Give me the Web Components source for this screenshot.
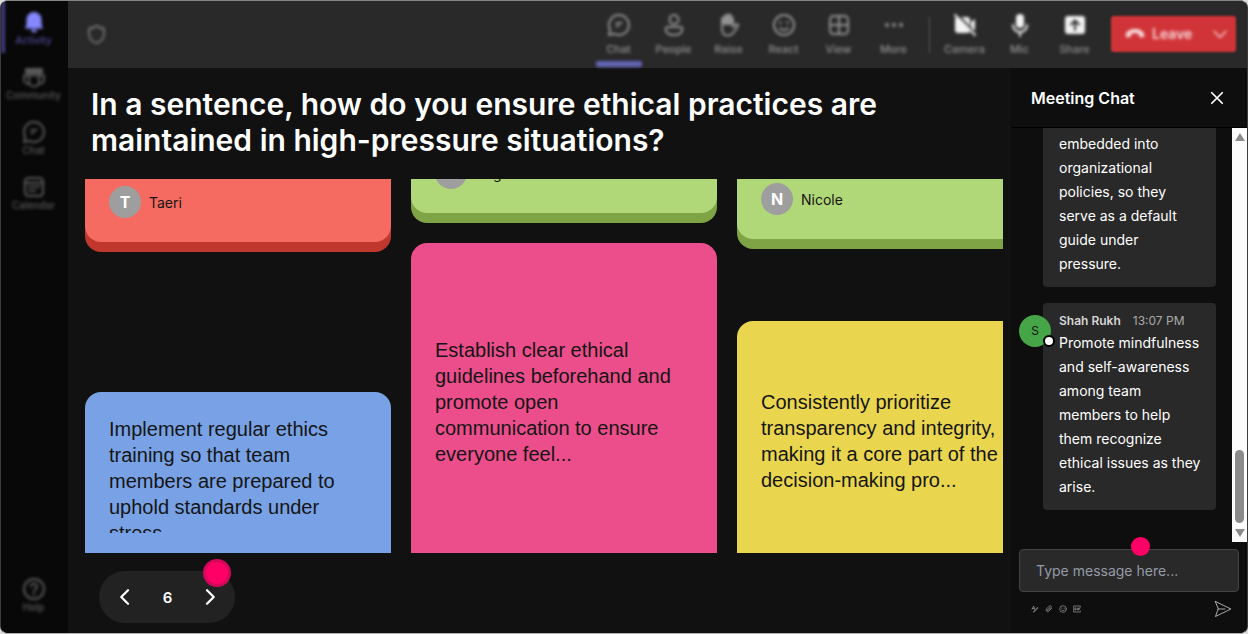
<!DOCTYPE html>
<html lang="en">
<head>
<meta charset="utf-8">
<meta name="viewport" content="width=device-width, initial-scale=1">
<title>Meeting</title>
<style>
    :root {
        --font: Inter, 'Liberation Sans', sans-serif;
        --bg: #111111;
        --bar: #292929;
        --accent: #6366b8;
        --pink: #ff0066;
        --soft: blur(1px) blur(1px);
    }

    body {
        margin: 0;
        background: #dcdcdc;
        font-family: var(--font);
        color: #fff;
    }
</style>
</head>
<body>
<meeting-app>
    <side-rail slot="rail">
        <rail-item icon="bell" active>Activity</rail-item>
        <rail-item icon="community">Community</rail-item>
        <rail-item icon="chat">Chat</rail-item>
        <rail-item icon="calendar">Calendar</rail-item>
        <rail-item icon="help" slot="bottom">Help</rail-item>
    </side-rail>

    <meeting-toolbar slot="toolbar">
        <tool-item icon="chat" active>Chat</tool-item>
        <tool-item icon="people">People</tool-item>
        <tool-item icon="hand">Raise</tool-item>
        <tool-item icon="smile">React</tool-item>
        <tool-item icon="grid">View</tool-item>
        <tool-item icon="more">More</tool-item>
        <tool-item slot="devices" icon="camera" bright>Camera</tool-item>
        <tool-item slot="devices" icon="mic" bright>Mic</tool-item>
        <tool-item slot="devices" icon="share" bright>Share</tool-item>
    </meeting-toolbar>

    <answer-board slot="board">
        <span slot="question">In a sentence, how do you ensure ethical practices are maintained in high-pressure situations?</span>
        <answer-column style="--head: 63px; --gap: 140px">
            <answer-card color="red" author="Taeri"></answer-card>
            <answer-card color="blue">Implement regular ethics training so that team members are prepared to uphold standards under stress.</answer-card>
        </answer-column>
        <answer-column style="--head: 34px; --gap: 20px; --text-top: 94px">
            <answer-card color="green" author="Angel"></answer-card>
            <answer-card color="pink">Establish clear ethical guidelines beforehand and promote open communication to ensure everyone feel...</answer-card>
        </answer-column>
        <answer-column style="--head: 60px; --gap: 72px; --text-top: 68px">
            <answer-card color="green" author="Nicole"></answer-card>
            <answer-card color="yellow">Consistently prioritize transparency and integrity, making it a core part of the decision-making pro...</answer-card>
        </answer-column>
    </answer-board>

    <meeting-chat slot="chat" heading="Meeting Chat">
        <chat-message>embedded into organizational policies, so they serve as a default guide under pressure.</chat-message>
        <chat-message author="Shah Rukh" time="13:07 PM">Promote mindfulness and self-awareness among team members to help them recognize ethical issues as they arise.</chat-message>
    </meeting-chat>
</meeting-app>

<script>
const icons = {
    bell: '<path fill="currentColor" stroke="none" d="M12 2a7.500 7.500 0 0 0-7.500 7.500v5L3 18.500h18l-1.500-4v-5A7.500 7.500 0 0 0 12 2zM9 19.500a3 3 0 0 0 6 0z"/>',
    community: '<path fill="currentColor" d="M4 4h16v4H4z"/><path d="M7 10.500h10v6a5 5 0 0 1-10 0zM7 10.500H2v4a4.500 4.500 0 0 0 5 4.500M17 10.500h5v4a4.500 4.500 0 0 1-5 4.500"/>',
    chat: '<path d="M12 2a10 10 0 1 1-4.800 18.800L2 22l1.200-5.200A10 10 0 0 1 12 2z"/><path d="M9.500 10h5M9.500 13h2"/>',
    calendar: '<rect x="3" y="3" width="18" height="18" rx="3.500"/><path d="M3 8h18M7 12h2M11 12h2M15 12h2M7 16h2M11 16h2"/>',
    help: '<circle cx="12" cy="12" r="10"/><path d="M9 9.500a3 3 0 1 1 4.500 2.600c-1 .6-1.500 1.200-1.500 2.400M12 17v1"/>',
    people: '<circle cx="12" cy="6.500" r="4.500"/><path d="M5.500 14h13a2 2 0 0 1 2 2c0 3.500-3.500 6-8.500 6s-8.500-2.500-8.500-6a2 2 0 0 1 2-2z"/>',
    hand: '<path fill="currentColor" d="M5 11V6a1.500 1.500 0 0 1 3 0V3.500a1.500 1.500 0 0 1 3 0V3a1.500 1.500 0 0 1 3 0v8z"/><path d="M5 11v5c0 4 2 6.500 6 6.500 3 0 4.500-1.500 6-3.500l4-6c.6-1.300-.5-2.400-1.800-1.700L16 14V5"/>',
    smile: '<circle cx="12" cy="12" r="10"/><path d="M8 15c2 2.800 6 2.800 8 0M8.500 9v1M15.500 9v1"/>',
    grid: '<rect x="3" y="3" width="18" height="18" rx="3.500"/><path d="M12 3v18M3 12h18"/>',
    more: '<g fill="currentColor" stroke="none"><circle cx="5" cy="12" r="2"/><circle cx="12" cy="12" r="2"/><circle cx="19" cy="12" r="2"/></g>',
    camera: '<path fill="currentColor" stroke="none" d="M5 4h9a3 3 0 0 1 3 3v10a3 3 0 0 1-3 3H5a3 3 0 0 1-3-3V7a3 3 0 0 1 3-3zM18 9l4-3v12l-4-3z"/><path stroke="#292929" d="M4 1l19 20"/><path d="M2 2l20 20"/>',
    mic: '<rect x="8" y="1" width="8" height="14" rx="4" fill="currentColor" stroke="none"/><path d="M5 12a7 7 0 0 0 14 0M12 19v4"/>',
    share: '<rect x="2" y="3" width="20" height="18" rx="3" fill="currentColor" stroke="none"/><path stroke="#292929" d="M12 17V8M8 11.500L12 7.500l4 4"/>',
    shield: '<path d="M12 2c2.500 2 5 3 8.500 3v6.500c0 5-3 8.500-8.500 10.500-5.500-2-8.500-5.500-8.500-10.500V5C7 5 9.500 4 12 2z"/>',
    phone: '<path fill="currentColor" stroke="none" d="M12 6C6.500 6 2 8.500 1 12c-.3 1.500 0 3.500 1 4 1 .3 3.500-.2 4.500-.8 1-.7.800-2.500 1.300-3.400C9 11 15 11 16.200 11.800c.5.900.3 2.700 1.300 3.400 1 .6 3.500 1.100 4.500.8 1-.5 1.300-2.500 1-4-1-3.500-5.500-6-11-6z"/>',
    down: '<path d="M3 8l9 9 9-9"/>',
    left: '<path d="M16 3l-9 9 9 9"/>',
    right: '<path d="M8 3l9 9-9 9"/>',
    close: '<path d="M3 3l18 18M21 3L3 21"/>',
    send: '<path d="M2 2l20.500 10L2 22l3.500-10zM5.500 12h9"/>',
    format: '<path d="M3 13L8 3l3 10M4 10h6M8 21l3-1 10-11-2-2L9 18z"/>',
    attach: '<path d="M20 10l-9 9a5 5 0 0 1-7-7l9-9a3.500 3.500 0 0 1 5 5l-9 9a1.500 1.500 0 0 1-2-2l8-8"/>',
    gif: '<path d="M22 6V3H2v18h20v-3M9 9H6v6h3v-3M13 9v6M21 9h-4v6M17 12h3"/>'
};

const icon = (name, size, stroke = 2) =>
    `<svg viewBox="0 0 24 24" width="${size}" height="${size}" fill="none" stroke="currentColor" stroke-width="${stroke}" stroke-linecap="round" stroke-linejoin="round" aria-hidden="true">${icons[name]}</svg>`;

const base = `
    * { box-sizing: border-box; }
    button { font: inherit; color: inherit; background: none; border: 0; padding: 0; cursor: pointer; }
    svg { display: block; flex: none; }
`;

class BaseElement extends HTMLElement {
    constructor() {
        super();
        this.attachShadow({ mode: 'open' });
    }

    connectedCallback() {
        this.shadowRoot.innerHTML = `<style>${base}${this.styles()}</style>${this.render()}`;
    }
}

class MeetingApp extends BaseElement {
    styles() {
        return `
        :host {
            display: grid;
            grid-template-columns: 67px minmax(0, 1fr) 236px;
            grid-template-rows: 67px minmax(0, 1fr);
            height: 100vh;
            overflow: hidden;
            box-sizing: border-box;
            background: var(--bg);
            border: 1px solid #3c3c3c;
            border-top-color: #858585;
            border-bottom-color: #b0b0b0;
            border-radius: 8px;
        }
        ::slotted([slot="rail"]) { grid-row: 1 / 3; }
        ::slotted([slot="toolbar"]) { grid-column: 2 / 4; }
        `;
    }

    render() {
        return `
        <slot name="rail"></slot>
        <slot name="toolbar"></slot>
        <slot name="board"></slot>
        <slot name="chat"></slot>`;
    }
}

class SideRail extends BaseElement {
    styles() {
        return `
        :host { display: block; background: #080808; }
        nav {
            height: 100%;
            padding-bottom: 10px;
            display: flex;
            flex-direction: column;
            justify-content: space-between;
        }
        `;
    }

    render() {
        return `
        <nav aria-label="Apps">
            <div><slot></slot></div>
            <div><slot name="bottom"></slot></div>
        </nav>`;
    }
}

class RailItem extends BaseElement {
    styles() {
        return `
        :host { display: block; height: 55px; color: #5a5a5a; }
        :host([active]) { color: #8588ff; }
        button {
            width: 100%;
            height: 52px;
            padding-top: 9px;
            display: flex;
            flex-direction: column;
            align-items: center;
            border-left: 4px solid transparent;
            border-right: 6px solid transparent;
            filter: var(--soft);
        }
        :host([active]) button { border-left-color: #3f4084; }
        span { font-size: 10px; line-height: 12px; font-weight: 500; color: #5a5a5a; white-space: nowrap; }
        :host([active]) span { color: #4a4b98; }
        `;
    }

    render() {
        return `<button type="button">${icon(this.getAttribute('icon'), 24)}<span><slot></slot></span></button>`;
    }
}

class MeetingToolbar extends BaseElement {
    styles() {
        return `
        :host {
            display: flex;
            align-items: center;
            background: var(--bar);
            padding: 0 11px 0 18px;
        }
        .shield { color: #7a7a7a; margin-right: auto; filter: var(--soft); }
        .tools { display: flex; align-self: stretch; }
        .divider { width: 1px; height: 36px; margin: 0 7px 0 8px; background: #555; filter: blur(1px); }
        .leave {
            display: flex;
            align-items: center;
            width: 125px;
            height: 36px;
            margin: 0 0 2px 9px;
            padding: 0 8px 0 14px;
            border-radius: 3px;
            background: #d13438;
            color: #f8dcdd;
            font-size: 14px;
            font-weight: 600;
            filter: blur(1px);
        }
        .leave > * { filter: blur(1px); }
        .leave span { margin: 0 auto 0 7px; }
        `;
    }

    render() {
        return `
        <div class="shield">${icon('shield', 21)}</div>
        <div class="tools"><slot></slot></div>
        <div class="divider"></div>
        <div class="tools"><slot name="devices"></slot></div>
        <button type="button" class="leave">${icon('phone', 20)}<span>Leave</span>${icon('down', 16)}</button>`;
    }
}

class ToolItem extends BaseElement {
    styles() {
        return `
        :host { display: block; width: 55px; color: #929292; }
        :host([bright]) { color: #f4f4f4; }
        button {
            width: 100%;
            height: 100%;
            padding-top: 12px;
            display: flex;
            flex-direction: column;
            align-items: center;
            gap: 4px;
            filter: var(--soft);
        }
        span { font-size: 11px; line-height: 16px; font-weight: 500; color: #929292; }
        :host([active]) button::after {
            content: '';
            width: 46px;
            height: 6px;
            border-radius: 2px;
            background: var(--accent);
        }
        `;
    }

    render() {
        return `<button type="button">${icon(this.getAttribute('icon'), 24)}<span><slot></slot></span></button>`;
    }
}

class AnswerBoard extends BaseElement {
    styles() {
        return `
        :host {
            display: flex;
            flex-direction: column;
            min-width: 0;
            padding: 18px 8px 10px 17px;
        }
        h1 {
            margin: 0 0 21px;
            padding: 0 80px 0 6px;
            font-size: 30px;
            line-height: 36px;
            font-weight: 600;
        }
        .board {
            flex: 1;
            min-height: 0;
            display: grid;
            grid-template-columns: repeat(3, 306px);
            grid-template-rows: minmax(0, 1fr);
            gap: 20px;
            overflow: hidden;
        }
        nav {
            position: relative;
            display: flex;
            justify-content: space-between;
            align-items: center;
            width: 136px;
            height: 52px;
            margin: 18px 0 0 14px;
            padding: 0 12px 0 13px;
            border-radius: 26px;
            background: #222;
            font-size: 15px;
            font-weight: 600;
        }
        nav button { padding: 4px; }
        .hotspot {
            position: absolute;
            top: -12px;
            right: 4px;
            width: 28px;
            height: 28px;
            border-radius: 50%;
            border: 3px solid #d4085a;
            background: var(--pink);
        }
        `;
    }

    render() {
        return `
        <h1><slot name="question"></slot></h1>
        <div class="board"><slot></slot></div>
        <nav aria-label="Slides">
            <button type="button" aria-label="Previous">${icon('left', 18, 3)}</button>
            <span>6</span>
            <button type="button" aria-label="Next">${icon('right', 18, 3)}</button>
            <div class="hotspot"></div>
        </nav>`;
    }
}

class AnswerColumn extends BaseElement {
    styles() {
        return `
        :host { display: flex; flex-direction: column; min-height: 0; }
        ::slotted([author]) { height: calc(var(--head) + 10px); margin-bottom: var(--gap); }
        ::slotted(:not([author])) { flex: 1; min-height: 0; }
        `;
    }

    render() {
        return '<slot></slot>';
    }
}

class AnswerCard extends BaseElement {
    styles() {
        return `
        :host {
            display: block;
            font-family: 'Liberation Sans', Arial, sans-serif;
            color: #151515;
        }
        :host([color="red"]) { --face: #f56b61; --edge: #c0372e; }
        :host([color="blue"]) { --face: #78a2e5; }
        :host([color="green"]) { --face: #b0d878; --edge: #7ea446; }
        :host([color="pink"]) { --face: #eb4e8a; }
        :host([color="yellow"]) { --face: #ead64e; }
        .card {
            height: 100%;
            background: var(--face);
            border-radius: 16px 16px 0 0;
            padding: var(--text-top, 24px) 20px 20px 24px;
        }
        p {
            margin: 0;
            height: 100%;
            overflow: hidden;
            font-size: 20px;
            line-height: 26px;
        }
        /* answers scrolled past the top only show their lower part */
        :host([author]) {
            overflow: hidden;
            background: var(--edge);
            border-radius: 0 0 16px 16px;
        }
        :host([author]) .card {
            display: flex;
            flex-direction: column;
            justify-content: flex-end;
            height: var(--head);
            padding: 0 24px 24px;
            border-radius: 0 0 16px 16px;
            overflow: hidden;
        }
        .author {
            display: flex;
            align-items: center;
            gap: 8px;
            font-family: var(--font);
            font-size: 14px;
        }
        .avatar {
            width: 32px;
            height: 32px;
            display: grid;
            place-items: center;
            border-radius: 50%;
            background: #9e9e9e;
            color: #fff;
            font-size: 16px;
            font-weight: 700;
        }
        `;
    }

    render() {
        const author = this.getAttribute('author');
        if (!author) return '<div class="card"><p><slot></slot></p></div>';
        return `
        <div class="card">
            <div class="author"><span class="avatar">${author[0]}</span><span>${author}</span></div>
        </div>`;
    }
}

class MeetingChat extends BaseElement {
    styles() {
        return `
        :host {
            display: flex;
            flex-direction: column;
            min-height: 0;
            background: #0e0e0e;
        }
        header {
            height: 60px;
            flex: none;
            display: flex;
            justify-content: space-between;
            align-items: center;
            padding: 0 23px 0 20px;
            border-bottom: 1px solid #000;
        }
        h2 { margin: 0; font-size: 16px; font-weight: 600; line-height: 24px; }
        .body { flex: 1; min-height: 0; display: flex; }
        .messages {
            flex: 1;
            min-width: 0;
            display: flex;
            flex-direction: column;
            justify-content: flex-end;
            gap: 16px;
            padding: 0 16px 32px 8px;
            overflow: hidden;
        }
        .scrollbar {
            width: 15px;
            flex: none;
            display: flex;
            flex-direction: column;
            align-items: center;
            justify-content: space-between;
            padding: 5px 0;
            background: #fcfcfc;
            color: #8b8b8b;
        }
        .thumb { width: 9px; height: 73px; margin: auto 0 6px; border-radius: 5px; background: #8b8b8b; }
        footer { flex: none; padding: 7px 8px 15px; }
        .field { position: relative; display: flex; }
        input {
            width: 100%;
            height: 43px;
            padding: 0 16px;
            border: 1px solid #444;
            border-radius: 4px;
            background: #292929;
            color: #fff;
            font: 14px/20px var(--font);
        }
        input::placeholder { color: #949ba4; opacity: 1; }
        .hotspot {
            position: absolute;
            top: -12px;
            left: calc(50% + 2px);
            width: 19px;
            height: 19px;
            border-radius: 50%;
            background: var(--pink);
        }
        .actions {
            display: flex;
            align-items: center;
            gap: 6px;
            padding: 8px 7px 0 12px;
            color: #a0a0a0;
        }
        .send { margin-left: auto; color: #ddd; }
        `;
    }

    render() {
        return `
        <header>
            <h2>${this.getAttribute('heading')}</h2>
            <button type="button" aria-label="Close">${icon('close', 14, 3)}</button>
        </header>
        <div class="body">
            <div class="messages"><slot></slot></div>
            <div class="scrollbar" aria-hidden="true">
                <svg width="10" height="8"><path fill="currentColor" d="M5 0l5 8H0z"/></svg>
                <div class="thumb"></div>
                <svg width="10" height="8"><path fill="currentColor" d="M0 0h10L5 8z"/></svg>
            </div>
        </div>
        <footer>
            <div class="field">
                <input type="text" aria-label="Message" placeholder="Type message here...">
                <div class="hotspot"></div>
            </div>
            <div class="actions">
                <button type="button" aria-label="Format">${icon('format', 8)}</button>
                <button type="button" aria-label="Attach">${icon('attach', 8)}</button>
                <button type="button" aria-label="Emoji">${icon('smile', 8)}</button>
                <button type="button" aria-label="GIF">${icon('gif', 8)}</button>
                <button type="button" aria-label="Send" class="send">${icon('send', 18, 1)}</button>
            </div>
        </footer>`;
    }
}

class ChatMessage extends BaseElement {
    styles() {
        return `
        :host {
            display: block;
            position: relative;
            margin-left: 24px;
            padding: 8px 12px 11px 16px;
            border-radius: 4px;
            background: #292929;
            font-size: 14px;
            line-height: 24px;
        }
        .meta { display: flex; gap: 12px; line-height: 20px; font-size: 12px; color: #aaa; white-space: nowrap; }
        b { font-weight: 600; color: #d6d6d6; }
        p { margin: 0; }
        .avatar {
            position: absolute;
            left: -24px;
            top: 12px;
            width: 32px;
            height: 32px;
            border-radius: 50%;
            background: #46a546;
            color: #111;
            font-size: 12px;
            line-height: 32px;
            text-align: center;
        }
        .avatar::after {
            content: '';
            position: absolute;
            right: -4px;
            bottom: 0;
            width: 8px;
            height: 8px;
            border: 2px solid #000;
            border-radius: 50%;
            background: #fff;
        }
        `;
    }

    render() {
        const author = this.getAttribute('author');
        const meta = author ? `
        <span class="avatar">${author[0]}</span>
        <div class="meta"><b>${author}</b><time>${this.getAttribute('time')}</time></div>` : '';
        return `${meta}<p><slot></slot></p>`;
    }
}

customElements.define('meeting-app', MeetingApp);
customElements.define('side-rail', SideRail);
customElements.define('rail-item', RailItem);
customElements.define('meeting-toolbar', MeetingToolbar);
customElements.define('tool-item', ToolItem);
customElements.define('answer-board', AnswerBoard);
customElements.define('answer-column', AnswerColumn);
customElements.define('answer-card', AnswerCard);
customElements.define('meeting-chat', MeetingChat);
customElements.define('chat-message', ChatMessage);
</script>
</body>
</html>
